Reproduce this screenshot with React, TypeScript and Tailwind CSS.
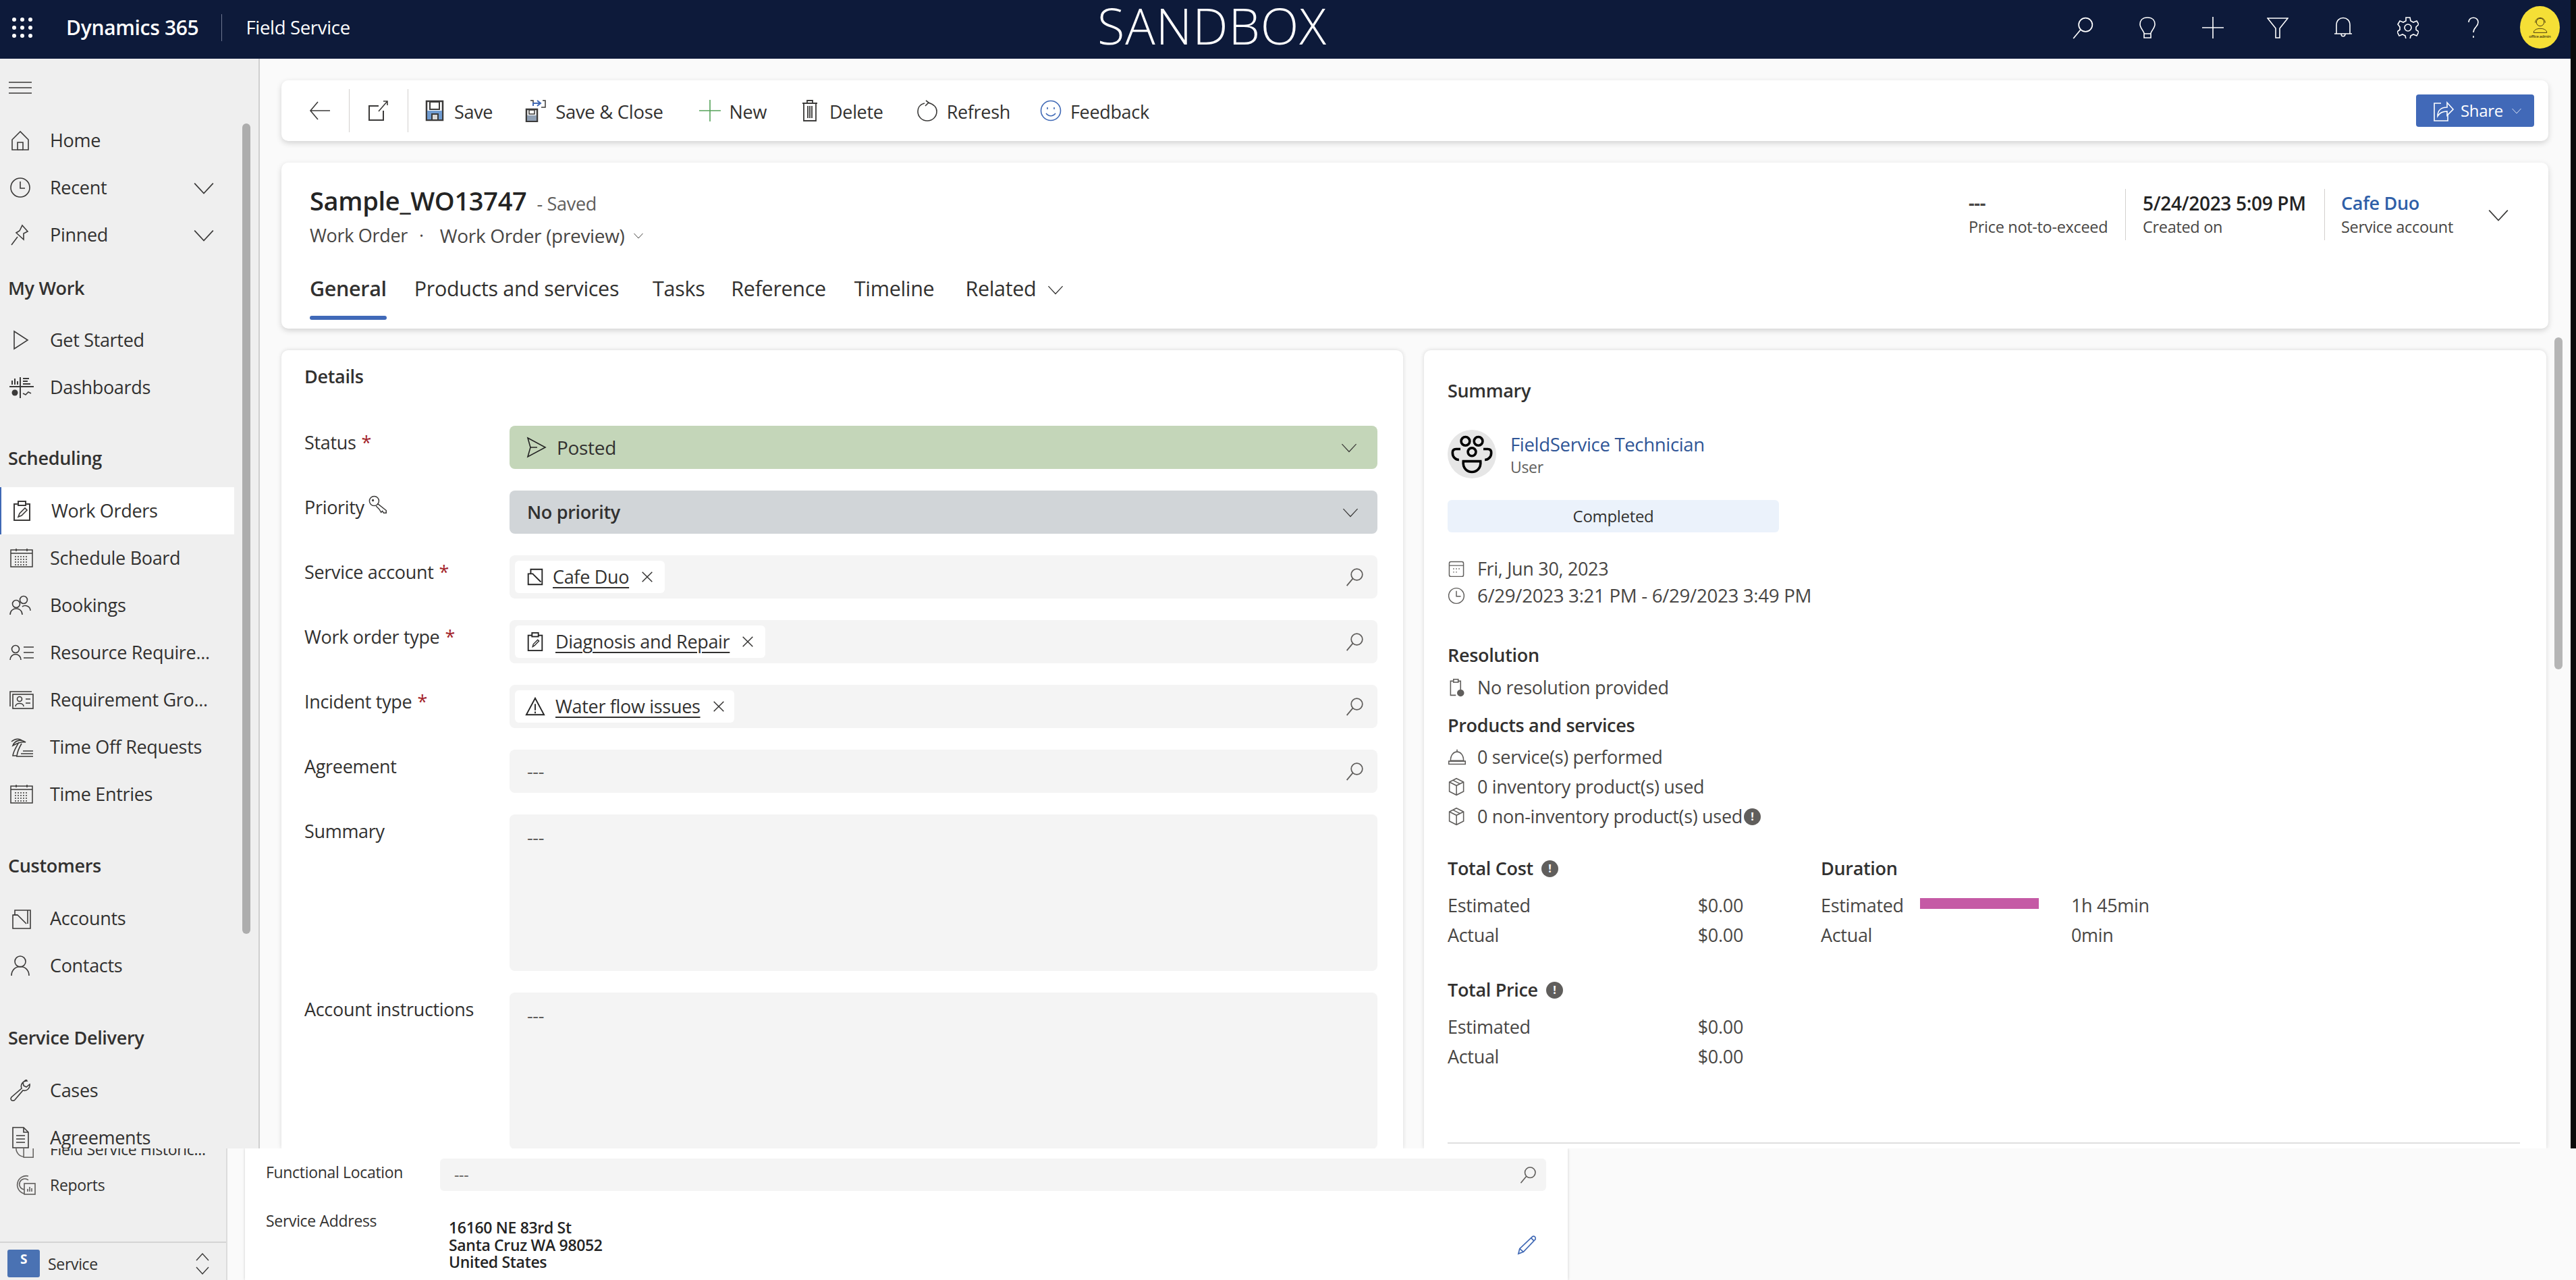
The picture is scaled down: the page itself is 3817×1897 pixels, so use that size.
import React from "react";

type IP = { s?: number; w?: number; h?: number; sw?: number; vb?: string; className?: string; children?: React.ReactNode };
const I = ({ s = 32, w, h, sw = 1.6, vb = "0 0 32 32", className = "", children }: IP) => (
  <svg width={w ?? s} height={h ?? s} viewBox={vb} fill="none" stroke="currentColor" strokeWidth={sw} className={"shrink-0 " + className}>
    {children}
  </svg>
);

const Chevron = ({ s = 32, sw = 1.6, className = "" }: { s?: number; sw?: number; className?: string }) => (
  <I s={s} sw={sw} className={className}><path d="M3 10 16 24 29 10" /></I>
);
const Search = ({ s = 32, sw = 1.6, className = "" }: { s?: number; sw?: number; className?: string }) => (
  <I s={s} sw={sw} className={className}><circle cx="20" cy="12" r="9.5" /><path d="M13 19 3 31" /></I>
);
const Cal = () => (
  <I w={36} h={32} vb="0 0 36 32" sw={1.5}>
    <rect x="2" y="4" width="32" height="25" />
    <path d="M2 9h32M10 2v4M26 2v4" />
    <path d="M8 14h20M8 18h20M8 22h20M8 26h20" strokeDasharray="2 2" />
  </I>
);

const nav: Record<string, React.ReactNode> = {
  home: <I><path d="M16 3 4 15v15h8V19h8v11h8V15z" /><path d="M12 30h8" /></I>,
  recent: <I><circle cx="16" cy="16" r="14" /><path d="M16 7v10h7" /></I>,
  pin: <I><path d="M19 2 27 11 21 14 21 23 10 13 15 10z" /><path d="M12 19 3 31" /></I>,
  play: <I><path d="M7 3v26L27 16z" /></I>,
  dash: (
    <I w={36} h={32} vb="0 0 36 32" sw={1.6}>
      <path d="M0 15h36M16 1v31" strokeWidth="2" />
      <path d="M4 12V6M8 12V3M12 12V7" strokeWidth="2" />
      <path d="M20 3h9M20 7h7M20 11h11" strokeWidth="2" />
      <circle cx="8" cy="24" r="4.5" fill="currentColor" stroke="none" />
      <path d="M20 25l4 2 4-4 4 2" />
    </I>
  ),
  clip: <I><rect x="5" y="6" width="23" height="24" strokeWidth="2" /><rect x="11" y="2" width="11" height="6" fill="#fff" strokeWidth="2" /><path d="M11 25l2-5 8-8 3 3-8 8z" /></I>,
  cal: <Cal />,
  book: <I><circle cx="21" cy="8" r="5.5" /><circle cx="10" cy="14" r="5.5" /><path d="M1 30c0-12 18-12 18 0M19 18c4-3 12-1 12 6" /></I>,
  req: (
    <I w={36} h={32} vb="0 0 36 32">
      <circle cx="9" cy="11" r="5.5" /><path d="M1 27c0-11 16-11 16 0M21 8h15M21 16h15M21 24h15" />
    </I>
  ),
  grp: (
    <I w={36} h={32} vb="0 0 36 32">
      <path d="M1 26V4h32" /><rect x="5" y="8" width="30" height="21" /><circle cx="15" cy="15" r="3.5" /><path d="M9 26c0-6 12-6 12 0M24 15h7M24 21h7" />
    </I>
  ),
  off: (
    <I w={36} h={32} vb="0 0 36 32">
      <path d="M5 14C8 6 17 4 24 9c-6-1-12 1-19 5zM3 8c6-5 12-5 18 0M14 9c-3 6-8 12-9 20h6c1-7 4-13 7-18" /><path d="M20 22h15M17 26h18M10 30h25" />
    </I>
  ),
  acct: <I><path d="M5 11v20h26V4H8v7h4z" /><path d="M6 11h6l13 13" /><path d="M27 4v20" /></I>,
  user: <I><circle cx="16" cy="10" r="8" /><path d="M3 31c0-18 26-18 26 0" /></I>,
  wrench: <I><path d="M26 2a8 8 0 0 0-8 11L3 26c-3 4 2 7 5 4L20 16a8 8 0 0 0 10-9l-5 4-4-2-1-5 5-4z" /></I>,
  doc: <I><path d="M5 1h16l7 7v23H5z" /><path d="M21 1v7h7M10 13h13M10 18h13M10 23h13" /></I>,
};

const NavRow = ({ icon, label, chev, active }: { icon: string; label: string; chev?: boolean; active?: boolean }) => (
  <div className={"flex h-[70px] items-center pl-[14px] text-[#323130] " + (active ? "w-[347px] border-l-2 border-[#3f68b5] bg-white pl-[12px]" : "w-[345px]")}>
    <span className="flex w-[60px] shrink-0 text-[#3b3a39]">{nav[icon]}</span>
    <span className="flex-1 truncate text-[27px] leading-[36px]">{label}</span>
    {chev && <Chevron s={34} className="mr-[26px] text-[#3b3a39]" />}
  </div>
);
const Section = ({ label, mt }: { label: string; mt: string }) => (
  <div className={"flex h-[70px] items-center pl-[12px] text-[27px] font-semibold text-[#323130] " + mt}>{label}</div>
);

const Sidebar = () => (
  <aside className="relative h-full w-[385px] shrink-0 overflow-hidden border-r-2 border-[#cfcfcf] bg-[#efefef] pt-[8px]">
    <div className="flex h-[70px] items-center pl-[13px] text-[#3b3a39]">
      <I w={34} h={20} vb="0 0 34 20"><path d="M0 2h34M0 10h34M0 18h34" /></I>
    </div>
    <div className="mt-[8px]">
      <NavRow icon="home" label="Home" />
      <NavRow icon="recent" label="Recent" chev />
      <NavRow icon="pin" label="Pinned" chev />
    </div>
    <Section label="My Work" mt="mt-[9px]" />
    <div className="mt-[7px]">
      <NavRow icon="play" label="Get Started" />
      <NavRow icon="dash" label="Dashboards" />
    </div>
    <Section label="Scheduling" mt="mt-[35px]" />
    <div className="mt-[8px]">
      <NavRow icon="clip" label="Work Orders" active />
      <NavRow icon="cal" label="Schedule Board" />
      <NavRow icon="book" label="Bookings" />
      <NavRow icon="req" label="Resource Require..." />
      <NavRow icon="grp" label="Requirement Gro..." />
      <NavRow icon="off" label="Time Off Requests" />
      <NavRow icon="cal" label="Time Entries" />
    </div>
    <Section label="Customers" mt="mt-[36px]" />
    <div className="mt-[8px]">
      <NavRow icon="acct" label="Accounts" />
      <NavRow icon="user" label="Contacts" />
    </div>
    <Section label="Service Delivery" mt="mt-[37px]" />
    <div className="mt-[8px]">
      <NavRow icon="wrench" label="Cases" />
      <NavRow icon="doc" label="Agreements" />
    </div>
    <div className="absolute left-[359px] top-[96px] h-[1201px] w-[12px] rounded-[6px] bg-[#adadad]" />
  </aside>
);

const TopIcon = ({ children }: { children: React.ReactNode }) => (
  <span className="flex w-[96.5px] justify-center">{children}</span>
);

const TopBar = () => (
  <header className="relative flex h-[87px] shrink-0 items-center bg-[#0d1a3a] pb-[6px] text-white">
    <div className="ml-[18px] grid h-[30px] w-[30px] grid-cols-3 gap-[6px]">
      {Array.from({ length: 9 }).map((_, i) => (
        <span key={i} className="h-[6px] w-[6px] rounded-full bg-white" />
      ))}
    </div>
    <span className="ml-[50px] text-[30px] font-semibold leading-[40px]">Dynamics 365</span>
    <span className="ml-[34px] h-[40px] w-[1px] bg-[#6d7690]" />
    <span className="ml-[35px] text-[27.5px] leading-[40px]">Field Service</span>
    <span className="absolute left-[1626px] top-0 text-[74px] font-light leading-[76px] tracking-[1px]">SANDBOX</span>
    <div className="ml-auto flex items-center pr-[16px]">
      <TopIcon><Search s={34} /></TopIcon>
      <TopIcon><I><path d="M16 1c-8 0-11 5-11 10 0 5 4 8 6 13v7h10v-7c2-5 6-8 6-13 0-5-3-10-11-10zM11 25h10" /></I></TopIcon>
      <TopIcon><I><path d="M16 0v32M0 16h32" /></I></TopIcon>
      <TopIcon><I><path d="M1 2h30L19 17v14h-6V17z" /></I></TopIcon>
      <TopIcon><I><path d="M6 25V12c0-14 20-14 20 0v13zM3 25h26M13 25c0 5 6 5 6 0" /></I></TopIcon>
      <TopIcon><I><circle cx="16" cy="16" r="5" /><path d="M13 1h6l1 5 4 2 5-2 3 5-4 4v4l4 3-3 6-5-2-4 2-1 5h-6l-1-5-4-2-5 2-3-6 4-3v-4L1 11l3-5 5 2 4-2z" /></I></TopIcon>
      <TopIcon><I><path d="M9 8c0-9 14-9 14 0 0 7-7 7-7 15M16 28v3" /></I></TopIcon>
      <div className="ml-[21px] flex h-[63px] w-[59px] flex-col items-center justify-center rounded-[50%] bg-[#f5df36] text-[#4a3a10]">
        <I s={26} sw={1.2}><circle cx="16" cy="11" r="7" /><path d="M7 12c0-12 18-12 18 0M4 30c0-10 24-10 24 0z" /></I>
        <span className="text-[6px] font-semibold leading-[8px]">office admin</span>
      </div>
    </div>
  </header>
);

const Cmd = ({ icon, label, ml, size = "text-[27px]" }: { icon: React.ReactNode; label: string; ml: string; size?: string }) => (
  <div className={"flex items-center " + ml}>
    <span className="flex w-[30px] justify-center">{icon}</span>
    <span className={"ml-[14px] mt-[3px] leading-[36px] text-[#323130] " + size}>{label}</span>
  </div>
);

const Floppy = ({ s = 32 }: { s?: number }) => (
  <svg width={s} height={s} viewBox="0 0 32 32" className="shrink-0">
    <path d="M4 2h24v28H4z" fill="#fff" stroke="#3b3a39" strokeWidth="2.5" />
    <rect x="5" y="16" width="22" height="13" fill="#6f9bd1" />
    <rect x="9" y="3" width="14" height="11" fill="#fff" stroke="#3b3a39" strokeWidth="2" />
    <rect x="12" y="21" width="9" height="9" fill="#d8d8d8" stroke="#3b3a39" strokeWidth="2" />
  </svg>
);

const CommandBar = () => (
  <div className="flex h-[90px] shrink-0 items-center rounded-[10px] bg-white shadow-[0_3px_8px_rgba(0,0,0,0.16)]">
    <span className="ml-[41px] flex text-[#3b3a39]"><I><path d="M13 3 2 16l11 13M2 16h29" /></I></span>
    <span className="ml-[27px] h-[64px] w-[1px] bg-[#d2d0ce]" />
    <span className="ml-[26px] flex text-[#3b3a39]"><I><path d="M24 16v14H3V9h14" strokeWidth="2" /><path d="M17 17 30 2M24 2h6v6" /></I></span>
    <span className="ml-[28px] h-[64px] w-[1px] bg-[#d2d0ce]" />
    <Cmd ml="ml-[24px]" label="Save" icon={<Floppy />} />
    <Cmd
      ml="ml-[49px]"
      size="text-[27.5px]"
      label="Save & Close"
      icon={
        <svg width="32" height="34" viewBox="0 0 32 34" fill="none" className="shrink-0">
          <path d="M2 15h16v18H2z" fill="#fff" stroke="#3b3a39" strokeWidth="2.5" />
          <rect x="3" y="24" width="14" height="8" fill="#8f9fb3" />
          <rect x="6" y="16" width="8" height="6" stroke="#3b3a39" strokeWidth="1.5" />
          <path d="M12 8V2h-4M26 2h4v10h-6" stroke="#3b3a39" strokeWidth="1.5" />
          <path d="M12 10V6h10M18 2l5 4-5 4" stroke="#3f68b5" strokeWidth="2" />
        </svg>
      }
    />
    <Cmd ml="ml-[54px]" label="New" icon={<span className="flex text-[#55a35a]"><I><path d="M16 0v32M0 16h32" /></I></span>} />
    <Cmd
      ml="ml-[49px]"
      label="Delete"
      icon={
        <span className="flex text-[#3b3a39]">
          <I w={24} h={32} vb="0 0 24 32" sw={1.8}><path d="M1 5h22M8 5V1h8v4M3 5v26h18V5M9 9v18M12 9v18M15 9v18" /></I>
        </span>
      }
    />
    <Cmd ml="ml-[50px]" label="Refresh" icon={<span className="flex text-[#3b3a39]"><I><path d="M12 5C4 7 2 13 2 17c0 8 6 14 14 14s14-6 14-14S24 6 17 4" /><path d="M14 1 18 4 13 9" /></I></span>} />
    <Cmd ml="ml-[45px]" label="Feedback" icon={<span className="flex text-[#3f68b5]"><I><circle cx="16" cy="16" r="14.5" /><path d="M9 20c4 5 10 5 14 0M11 11v3M21 11v3" /></I></span>} />
    <div className="ml-auto mr-[21px] flex h-[48px] w-[175px] items-center rounded-[4px] bg-[#4169b8] pl-[24px] text-white">
      <I s={32} sw={1.6}><path d="M13 5H3v26h20v-9" /><path d="M8 24c0-9 6-13 14-13V4l9 10-9 9v-6c-7 0-11 2-14 7z" /></I>
      <span className="ml-[10px] text-[24px] leading-[32px]">Share</span>
      <Chevron s={16} className="ml-[12px]" />
    </div>
  </div>
);

const Stat = ({ top, bottom, topCls }: { top: string; bottom: string; topCls: string }) => (
  <div className="flex flex-col">
    <span className={"leading-[36px] " + topCls}>{top}</span>
    <span className="text-[23.5px] leading-[34px] text-[#484644]">{bottom}</span>
  </div>
);

const Header = () => (
  <div className="mt-[32px] h-[246px] shrink-0 rounded-[10px] bg-white pl-[42px] shadow-[0_3px_8px_rgba(0,0,0,0.16)]">
    <div className="flex">
      <div className="flex-1 pt-[28px]">
        <div className="flex items-baseline text-[#242424]">
          <span className="text-[38px] font-semibold leading-[56px]">Sample_WO13747</span>
          <span className="ml-[15px] text-[27px] text-[#605e5c]">- Saved</span>
        </div>
        <div className="mt-[6px] flex items-center text-[27px] leading-[36px] text-[#484644]">
          <span className="font-medium">Work Order</span>
          <span className="ml-[17px]">·</span>
          <span className="ml-[24px] text-[28px] font-medium">Work Order (preview)</span>
          <Chevron s={16} className="ml-[12px]" sw={2} />
        </div>
      </div>
      <div className="mt-[39px] flex h-[76px] items-center">
        <div className="w-[232px]">
          <Stat top="---" bottom="Price not-to-exceed" topCls="text-[27px] font-bold text-[#484644]" />
        </div>
        <span className="h-[76px] w-[1px] bg-[#d2d0ce]" />
        <div className="w-[294px] pl-[25px]">
          <Stat top="5/24/2023 5:09 PM" bottom="Created on" topCls="text-[28px] font-semibold text-[#242424]" />
        </div>
        <span className="h-[76px] w-[1px] bg-[#d2d0ce]" />
        <div className="w-[240px] pl-[24px]">
          <Stat top="Cafe Duo" bottom="Service account" topCls="text-[27px] font-semibold text-[#2f5fa8]" />
        </div>
        <Chevron s={34} className="mr-[57px] text-[#3b3a39]" />
      </div>
    </div>
    <div className="mt-[37px] flex items-start text-[30.5px] leading-[46px] text-[#323130]">
      <div className="flex flex-col">
        <span className="font-semibold">General</span>
        <span className="mt-[18px] h-[6px] shrink-0 rounded-[3px] bg-[#4069b8]" />
      </div>
      <span className="ml-[41px]">Products and services</span>
      <span className="ml-[50px]">Tasks</span>
      <span className="ml-[39px]">Reference</span>
      <span className="ml-[42px]">Timeline</span>
      <span className="ml-[46px]">Related</span>
      <Chevron s={26} className="ml-[16px] mt-[12px]" />
    </div>
  </div>
);

const Req = () => <span className="ml-[8px] text-[#a4262c]">*</span>;

const FieldRow = ({ label, req, extra, children, h = "h-[64px]", bg = "bg-[#f4f4f4]" }: { label: string; req?: boolean; extra?: React.ReactNode; children?: React.ReactNode; h?: string; bg?: string }) => (
  <div className="mb-[32px] flex text-[27px] text-[#323130]">
    <div className="flex w-[304px] shrink-0 items-start pt-[7px] leading-[36px]">
      {label}
      {req && <Req />}
      {extra}
    </div>
    <div className={"flex flex-1 items-center rounded-[8px] " + h + " " + bg}>{children}</div>
  </div>
);

const Chip = ({ icon, label, w, pad }: { icon: React.ReactNode; label: string; w: string; pad: string }) => (
  <div className="flex flex-1 items-center pl-[8px] pr-[20px]">
    <div className={"flex h-[48px] items-center rounded-[6px] bg-white pl-[14px] " + w}>
      <span className="flex w-[32px] justify-center text-[#242424]">{icon}</span>
      <span className={"text-[27px] leading-[34px] text-[#323130] underline underline-offset-[5px] " + pad}>{label}</span>
      <span className="ml-[18px] flex text-[#323130]"><I s={18} sw={2.6}><path d="M3 3l26 26M29 3 3 29" /></I></span>
    </div>
    <Search s={28} sw={2} className="ml-auto text-[#605e5c]" />
  </div>
);

const Details = () => (
  <section className="h-full w-[1662px] shrink-0 overflow-hidden rounded-t-[10px] bg-white pl-[34px] pr-[38px] shadow-[0_0_6px_rgba(0,0,0,0.14)]">
    <div className="flex h-[112px] items-start pt-[20px] text-[27px] font-semibold leading-[38px] text-[#323130]">Details</div>
    <FieldRow label="Status" req bg="bg-[#c4d6b9]">
      <span className="ml-[24px] flex text-[#242424]"><I><path d="M3 2 29 16 3 30l4-14zM7 16h10" /></I></span>
      <span className="ml-[14px] text-[28px] leading-[36px] font-medium text-[#323130]">Posted</span>
      <Chevron s={26} className="ml-auto mr-[29px] text-[#3b3a39]" />
    </FieldRow>
    <FieldRow
      label="Priority"
      bg="bg-[#d1d5d8]"
      extra={<span className="ml-[6px] flex text-[#3b3a39]"><I s={30}><circle cx="9" cy="9" r="7.5" /><path d="M14 13 28 24v4h-4l-2-3-2 2-3-5-5-5" /><circle cx="7" cy="8" r="1" /></I></span>}
    >
      <span className="ml-[26px] font-semibold leading-[36px] text-[#323130]">No priority</span>
      <Chevron s={26} className="ml-auto mr-[27px] text-[#3b3a39]" />
    </FieldRow>
    <FieldRow label="Service account" req>
      <Chip w="w-[222px]" pad="ml-[10px]" label="Cafe Duo" icon={<I s={30} sw={2}><path d="M5 11v17h22V4H9v7h4zM6 11h6l13 13" /></I>} />
    </FieldRow>
    <FieldRow label="Work order type" req>
      <Chip w="w-[371px]" pad="ml-[14px]" label="Diagnosis and Repair" icon={<I s={30} sw={2}><rect x="5" y="6" width="22" height="24" /><rect x="11" y="2" width="10" height="6" fill="#fff" /><path d="M12 24l1-4 7-7 2 2-7 7z" strokeWidth="1.4" /></I>} />
    </FieldRow>
    <FieldRow label="Incident type" req>
      <Chip w="w-[325px]" pad="ml-[14px]" label="Water flow issues" icon={<I s={30} sw={2}><path d="M16 3 2 29h28zM16 12v10M16 24v3" /></I>} />
    </FieldRow>
    <FieldRow label="Agreement">
      <div className="flex flex-1 items-center pl-[26px] pr-[20px]">
        <span className="text-[#605e5c]">---</span>
        <Search s={28} sw={2} className="ml-auto text-[#605e5c]" />
      </div>
    </FieldRow>
    <FieldRow label="Summary" h="h-[232px] !items-start">
      <span className="ml-[26px] mt-[16px] leading-[36px] text-[#605e5c]">---</span>
    </FieldRow>
    <FieldRow label="Account instructions" h="h-[232px] !items-start">
      <span className="ml-[26px] mt-[16px] leading-[36px] text-[#605e5c]">---</span>
    </FieldRow>
  </section>
);

const Info = ({ className = "" }: { className?: string }) => (
  <span className={"flex h-[25px] w-[25px] shrink-0 items-center justify-center rounded-full bg-[#605e5c] text-[16px] font-bold leading-none text-white " + className}>!</span>
);

const SumRow = ({ icon, children, mt, size = "text-[27px]" }: { icon: React.ReactNode; children: React.ReactNode; mt: string; size?: string }) => (
  <div className={"flex h-[40px] items-center text-[#484644] " + size + " " + mt}>
    <span className="flex w-[44px] shrink-0 text-[#605e5c]">{icon}</span>
    {children}
  </div>
);
const Head = ({ children, mt }: { children: React.ReactNode; mt: string }) => (
  <div className={"flex h-[40px] items-center text-[27px] font-semibold text-[#323130] " + mt}>{children}</div>
);
const Money = ({ label, mt }: { label: string; mt: string }) => (
  <div className={"flex h-[40px] w-[438px] items-center justify-between text-[27px] text-[#484644] " + mt}>
    <span>{label}</span>
    <span>$0.00</span>
  </div>
);
const Box = () => <I s={28} sw={1.8}><path d="M15 2 27 8v16l-12 6-12-6V8zM3 8l12 6 12-6M15 14v16M9 5l12 6" /></I>;

const Summary = () => (
  <section className="h-full w-[1663px] shrink-0 overflow-hidden rounded-t-[10px] bg-white pl-[35px] shadow-[0_0_6px_rgba(0,0,0,0.14)]">
    <Head mt="mt-[40px]">Summary</Head>
    <div className="mt-[38px] flex h-[72px]">
      <span className="flex h-[72px] w-[72px] items-center justify-center rounded-full bg-[#e6e6e6] text-black">
        <I s={68} sw={1.7}>
          <circle cx="11.5" cy="7" r="3" /><circle cx="20.5" cy="7" r="3" /><circle cx="16" cy="14.5" r="2.8" />
          <path d="M8 12.5H5c-2 0-2.5 1-2.5 2.5 0 3 2 5 4.5 5M24 12.5h3c2 0 2.5 1 2.5 2.5 0 3-2 5-4.5 5M10 21h12c1 10-13 10-12 0z" />
        </I>
      </span>
      <div className="ml-[21px] flex flex-col pt-[4px]">
        <span className="text-[27.5px] font-medium leading-[36px] text-[#2f5596]">FieldService Technician</span>
        <span className="text-[23px] leading-[30px] text-[#605e5c]">User</span>
      </div>
    </div>
    <div className="mt-[32px] flex h-[48px] w-[491px] items-center justify-center rounded-[6px] bg-[#ebf2fb] text-[24px] text-[#323130]">Completed</div>
    <SumRow mt="mt-[34px]" icon={<I s={26} sw={1.8}><rect x="3" y="3" width="26" height="27" rx="3" /><path d="M3 10h26M10 16h2M15 16h2M20 16h2M10 22h2M15 22h2" /></I>}>
      Fri, Jun 30, 2023
    </SumRow>
    <SumRow mt="" size="text-[27.7px]" icon={<I s={26} sw={1.8}><circle cx="16" cy="16" r="14" /><path d="M16 7v10h8" /></I>}>
      6/29/2023 3:21 PM - 6/29/2023 3:49 PM
    </SumRow>
    <Head mt="mt-[48px]">Resolution</Head>
    <SumRow mt="mt-[8px]" icon={<I s={28} sw={1.8}><path d="M17 5h5v16M14 29H5V5h5" /><rect x="10" y="2" width="8" height="5" /><circle cx="22" cy="25" r="6" fill="currentColor" stroke="none" /></I>}>
      No resolution provided
    </SumRow>
    <Head mt="mt-[16px]">Products and services</Head>
    <SumRow mt="mt-[7px]" icon={<I s={28} sw={1.8}><path d="M16 3v4M5 22c0-20 22-20 22 0zM2 23h28v5H2z" /></I>}>
      0 service(s) performed
    </SumRow>
    <SumRow mt="mt-[4px]" icon={<Box />}>0 inventory product(s) used</SumRow>
    <SumRow mt="mt-[4px]" icon={<Box />}>
      0 non-inventory product(s) used
      <Info className="ml-[2px]" />
    </SumRow>
    <div className="flex">
      <div className="w-[553px] shrink-0">
        <Head mt="mt-[37px]">Total Cost<Info className="ml-[12px]" /></Head>
        <Money label="Estimated" mt="mt-[15px]" />
        <Money label="Actual" mt="mt-[4px]" />
        <Head mt="mt-[41px]">Total Price<Info className="ml-[12px]" /></Head>
        <Money label="Estimated" mt="mt-[15px]" />
        <Money label="Actual" mt="mt-[4px]" />
      </div>
      <div>
        <Head mt="mt-[37px]">Duration</Head>
        <div className="mt-[15px] flex h-[40px] items-center text-[27px] text-[#484644]">
          <span className="w-[147px]">Estimated</span>
          <span className="mb-[6px] h-[16px] w-[176px] bg-[#c55aa5]" />
          <span className="ml-[48px]">1h 45min</span>
        </div>
        <div className="mt-[4px] flex h-[40px] items-center text-[27px] text-[#484644]">
          <span className="w-[371px]">Actual</span>
          <span>0min</span>
        </div>
      </div>
    </div>
    <div className="mt-[107px] h-[2px] w-[1589px] bg-[#dfdfdf]" />
  </section>
);

const BottomNavText = "text-[23px] leading-[30px] text-[#323130]";

const Bottom = () => (
  <div className="flex h-[195px] shrink-0 bg-[#fafafa]">
    <div className="flex h-full w-[337px] shrink-0 flex-col border-r-2 border-[#dcdcdc] bg-[#efefef]">
      <div className="h-[18px] overflow-hidden">
        <div className={"-mt-[14px] flex items-center pl-[22px] " + BottomNavText}>
          <span className="flex w-[52px] shrink-0 text-[#605e5c]"><I s={30}><circle cx="15" cy="15" r="13" /><rect x="14" y="14" width="15" height="15" fill="#efefef" /></I></span>
          Field Service Historic...
        </div>
      </div>
      <div className={"mt-[11px] flex h-[50px] items-center pl-[22px] " + BottomNavText}>
        <span className="flex w-[52px] shrink-0 text-[#605e5c]">
          <I s={32} sw={1.6}><path d="M20 3a13 13 0 1 0-6 26M20 9a8 8 0 1 0-6 14" /><rect x="14" y="14" width="16" height="16" /><path d="M19 26v-4M22 26v-7M25 26v-5" /></I>
        </span>
        Reports
      </div>
      <div className="mt-[59px] flex h-[57px] items-center border-t-2 border-[#d4d4d4] pl-[11px] pt-[6px]">
        <span className="flex h-[41px] w-[48px] items-start justify-center rounded-[3px] bg-[#4a72b3] pt-[1px] text-[19px] font-bold leading-[26px] text-white">S</span>
        <span className="ml-[12px] flex-1 text-[23px] font-medium leading-[30px] text-[#323130]">Service</span>
        <span className="mr-[25px] flex flex-col gap-[8px] text-[#3b3a39]">
          <I w={20} h={12} vb="0 0 20 12" sw={1.4}><path d="M1 11 10 1l9 10" /></I>
          <I w={20} h={12} vb="0 0 20 12" sw={1.4}><path d="M1 1l9 10 9-10" /></I>
        </span>
      </div>
    </div>
    <div className="w-[26px] shrink-0 bg-[#fafafa]" />
    <div className="w-[1960px] shrink-0 bg-white pl-[31px] pr-[32px] pt-[15px] shadow-[0_0_4px_rgba(0,0,0,0.18)]">
      <div className="flex">
        <span className="w-[258px] shrink-0 pt-[5px] text-[23px] leading-[30px] text-[#323130]">Functional Location</span>
        <div className="flex h-[48px] flex-1 items-center rounded-[6px] bg-[#f4f4f4] pl-[21px] pr-[14px]">
          <span className="text-[23px] text-[#605e5c]">---</span>
          <Search s={26} sw={2} className="ml-auto text-[#605e5c]" />
        </div>
      </div>
      <div className="mt-[29px] flex">
        <span className="w-[271px] shrink-0 text-[23px] leading-[30px] text-[#323130]">Service Address</span>
        <div className="flex-1 pt-[13px] text-[23px] font-semibold leading-[25.5px] text-[#242424]">
          <div>16160 NE 83rd St</div>
          <div>Santa Cruz WA 98052</div>
          <div>United States</div>
        </div>
        <span className="mr-[13px] mt-[36px] flex text-[#3f68b5]"><I s={30} sw={1.8}><path d="M2 30l2-8L24 3c3-2 6 1 5 4L10 27zM4 22l6 5M22 5l5 5" /></I></span>
      </div>
    </div>
  </div>
);

export default function App() {
  return (
    <div className="flex h-[1897px] w-[3817px] flex-col overflow-hidden bg-[#fafafa] font-['Open_Sans','Noto_Sans',sans-serif] tracking-[-0.02em]">
      <div className="flex h-[1702px] shrink-0">
        <div className="flex w-[3809px] shrink-0 flex-col">
          <TopBar />
          <div className="flex h-[1615px]">
            <Sidebar />
            <main className="relative flex h-full flex-1 flex-col overflow-hidden bg-[#fafafa] pl-[32px] pr-[33px] pt-[32px]">
              <CommandBar />
              <Header />
              <div className="mt-[32px] flex h-[1183px] gap-[31px]">
                <Details />
                <Summary />
              </div>
              <div className="absolute left-[3400px] top-[413px] h-[492px] w-[12px] rounded-[6px] bg-[#b5b5b5]" />
            </main>
          </div>
        </div>
        <div className="flex-1 bg-[#0a0a0a]" />
      </div>
      <Bottom />
    </div>
  );
}
